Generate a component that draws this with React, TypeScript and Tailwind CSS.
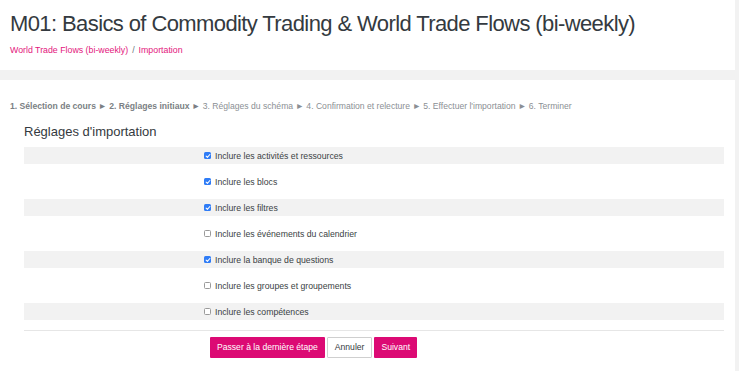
import React from "react";

const items: { label: string; checked: boolean }[] = [
  { label: "Inclure les activités et ressources", checked: true },
  { label: "Inclure les blocs", checked: true },
  { label: "Inclure les filtres", checked: true },
  { label: "Inclure les événements du calendrier", checked: false },
  { label: "Inclure la banque de questions", checked: true },
  { label: "Inclure les groupes et groupements", checked: false },
  { label: "Inclure les compétences", checked: false },
];

function Box({ checked }: { checked: boolean }) {
  if (checked) {
    return (
      <span className="flex h-[7px] w-[7px] items-center justify-center rounded-[1.5px] bg-[#2f7cf6]">
        <svg width="6" height="6" viewBox="0 0 8 8">
          <path d="M1.5 4.2 L3.2 5.8 L6.5 2" stroke="white" strokeWidth="1.4" fill="none" strokeLinecap="round" strokeLinejoin="round" />
        </svg>
      </span>
    );
  }
  return <span className="h-[7px] w-[7px] rounded-[1.5px] border border-[#9a9a9a] bg-white" />;
}

export default function App() {
  return (
    <div
      className="h-[371px] w-[739px] overflow-hidden bg-[#f2f2f2] text-[#343a40]"
      style={{ fontFamily: '"Liberation Sans", Arial, sans-serif' }}
    >
      <div className="h-[70px] w-[735px] bg-white px-[10px] pt-[10px]">
        <h1 className="text-[22px] leading-[28px] tracking-[-0.6px] text-[#343a40]">
          M01: Basics of Commodity Trading &amp; World Trade Flows (bi-weekly)
        </h1>
        <div className="mt-[6px] flex items-center gap-[4px] text-[8.8px] leading-[12px]">
          <span className="text-[#e3167c]">World Trade Flows (bi-weekly)</span>
          <span className="text-[#6c757d]">/</span>
          <span className="text-[#e3167c]">Importation</span>
        </div>
      </div>
      <div className="mt-[10px] h-[291px] w-[735px] bg-white">
        <div className="px-[10px] pt-[20px] text-[8.6px] leading-[12px] text-[#8b8f94]">
          <span className="font-bold text-[#7b7f84]">1. Sélection de cours ► 2. Réglages initiaux ►</span>{" "}
          3. Réglages du schéma ► 4. Confirmation et relecture ► 5. Effectuer l'importation ► 6. Terminer
        </div>
        <div className="px-[24px] pr-[11px]">
          <h2 className="mt-[11px] text-[13px] leading-[18px] text-[#343a40]">Réglages d'importation</h2>
          <div className="mt-[6px] flex flex-col gap-[9px]">
            {items.map((it, i) => (
              <div
                key={i}
                className={`flex h-[17px] items-center ${i % 2 === 0 ? "bg-[#f2f2f2]" : "bg-white"}`}
              >
                <div className="w-[180px]" />
                <div className="flex items-center gap-[4px]">
                  <Box checked={it.checked} />
                  <span className="text-[8.7px] leading-[12px] text-[#3a3f44]">{it.label}</span>
                </div>
              </div>
            ))}
          </div>
          <div className="mt-[10px] border-t border-[#e6e6e6]" />
          <div className="mt-[6px] flex gap-[2px] pl-[186px]">
            <button className="h-[21px] rounded-[1px] bg-[#dc0a74] px-[7px] text-[8.6px] text-white">
              Passer à la dernière étape
            </button>
            <button className="h-[21px] rounded-[1px] border border-[#cfcfcf] bg-white px-[7px] text-[8.6px] text-[#343a40]">
              Annuler
            </button>
            <button className="h-[21px] rounded-[1px] bg-[#dc0a74] px-[7px] text-[8.6px] text-white">
              Suivant
            </button>
          </div>
        </div>
      </div>
    </div>
  );
}
